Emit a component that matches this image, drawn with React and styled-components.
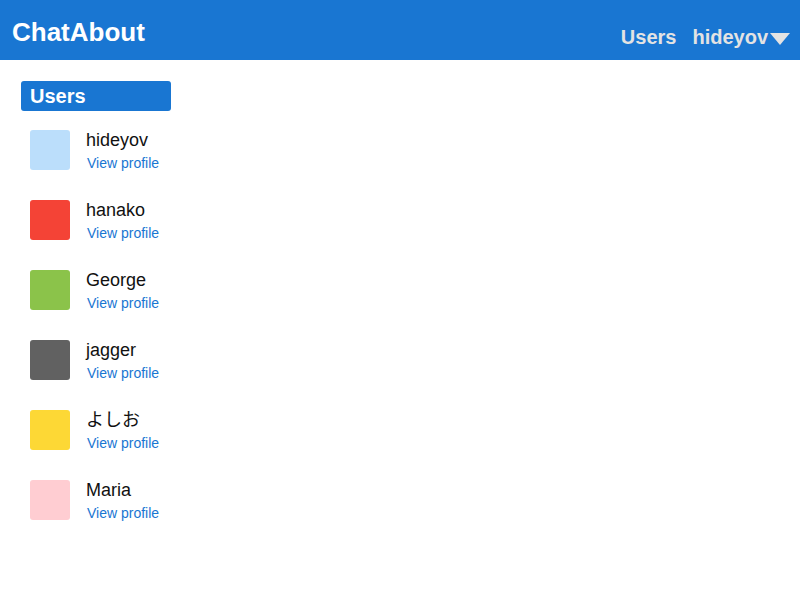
import React from "react";
import styled, { createGlobalStyle } from "styled-components";

const GlobalStyle = createGlobalStyle`
    body {
        margin: 0;
        background: #fff;
        font-family: "Liberation Sans", Arial, "Noto Sans CJK JP", sans-serif;
    }
`;

const Header = styled.header`
    display: flex;
    justify-content: space-between;
    align-items: flex-start;
    height: 60px;
    box-sizing: border-box;
    padding: 17px 10px 0 12px;
    background: #1976d2;
`;

const Brand = styled.div`
    color: #fff;
    font-size: 26px;
    line-height: 30px;
    font-weight: bold;
`;

const Nav = styled.nav`
    display: flex;
    align-items: center;
    gap: 16px;
    margin-top: 8px;
`;

const NavItem = styled.div`
    display: flex;
    align-items: center;
    color: #e3e3e3;
    font-size: 20px;
    line-height: 24px;
    font-weight: bold;
`;

const Caret = styled.span`
    display: inline-block;
    width: 0;
    height: 0;
    margin-left: 2px;
    margin-top: 3px;
    border-left: 10px solid transparent;
    border-right: 10px solid transparent;
    border-top: 12px solid #e3e3e3;
`;

const Main = styled.main`
    padding: 21px 21px;
`;

const SectionTitle = styled.h2`
    margin: 0;
    width: 150px;
    height: 30px;
    box-sizing: border-box;
    padding-left: 9px;
    border-radius: 3px;
    background: #1976d2;
    color: #fff;
    font-size: 20px;
    line-height: 30px;
    font-weight: bold;
`;

const UserList = styled.ul`
    list-style: none;
    margin: 15px 0 0;
    padding: 0 0 0 9px;
    display: flex;
    flex-direction: column;
    gap: 22px;
`;

const UserRow = styled.li`
    display: flex;
    align-items: center;
    gap: 16px;
`;

const Avatar = styled.div`
    width: 40px;
    height: 40px;
    border-radius: 3px;
    background: ${(p) => p.color};
`;

const UserInfo = styled.div`
    display: flex;
    flex-direction: column;
    padding-top: 2px;
`;

const UserName = styled.div`
    color: #111;
    font-size: 18px;
    line-height: 24px;
`;

const ProfileLink = styled.a`
    color: #1976d2;
    font-size: 14px;
    line-height: 22px;
    margin-left: 1px;
    text-decoration: none;
`;

const users = [
    { id: 1, name: "hideyov", color: "#bbdefb" },
    { id: 2, name: "hanako", color: "#f44336" },
    { id: 3, name: "George", color: "#8bc34a" },
    { id: 4, name: "jagger", color: "#616161" },
    { id: 5, name: "よしお", color: "#fdd835" },
    { id: 6, name: "Maria", color: "#ffcdd2" },
];

export default function App() {
    return (
        <>
            <GlobalStyle />
            <Header>
                <Brand>ChatAbout</Brand>
                <Nav>
                    <NavItem>Users</NavItem>
                    <NavItem>
                        hideyov
                        <Caret />
                    </NavItem>
                </Nav>
            </Header>
            <Main>
                <SectionTitle>Users</SectionTitle>
                <UserList>
                    {users.map((u) => (
                        <UserRow key={u.id}>
                            <Avatar color={u.color} />
                            <UserInfo>
                                <UserName>{u.name}</UserName>
                                <ProfileLink href="#">View profile</ProfileLink>
                            </UserInfo>
                        </UserRow>
                    ))}
                </UserList>
            </Main>
        </>
    );
}
